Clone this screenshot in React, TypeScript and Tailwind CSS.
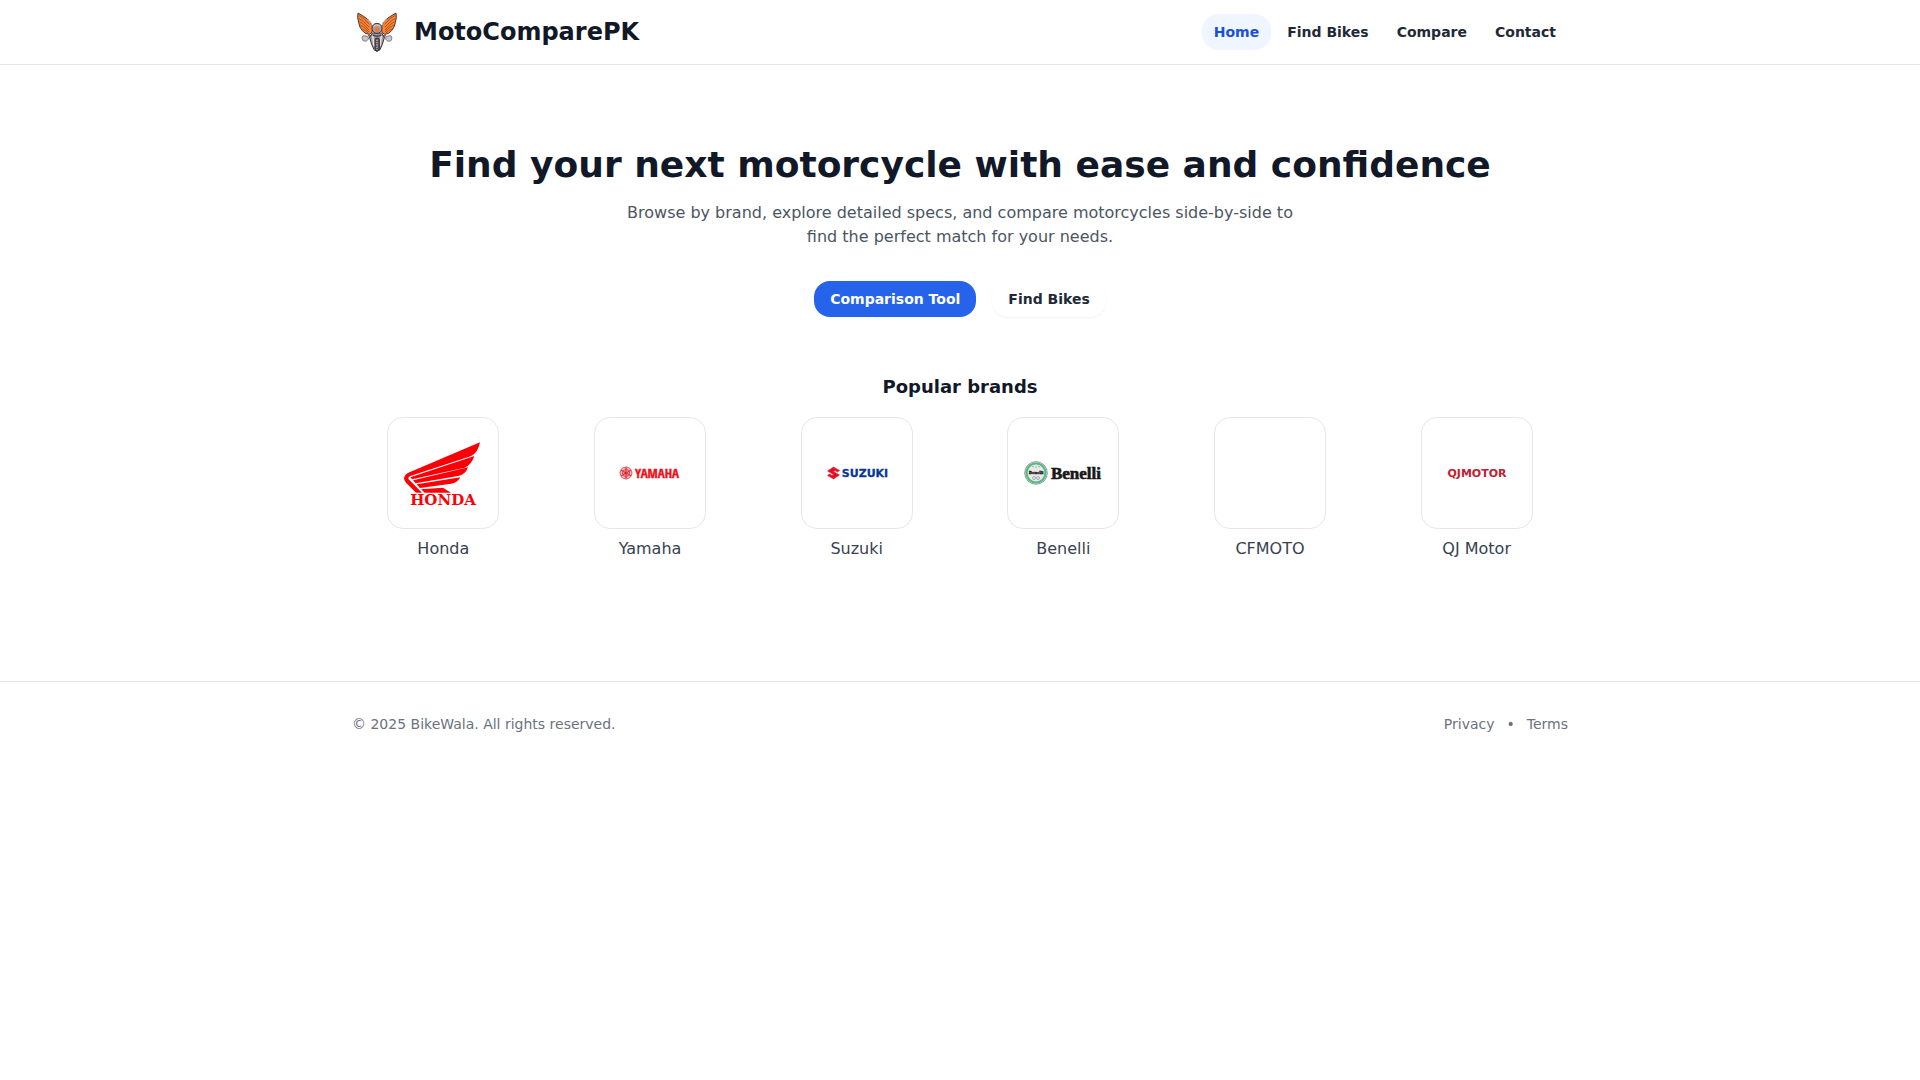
import type { ReactNode } from "react";

function WingedBikeLogo() {
  const wing = (
    <>
      <path d="M18 18 L33 27 L46 36 L56 47 L62 62 L60 76 L52 82 L40 79 L31 71 L24 60 L20 47 L17 32 Z" fill="#fb8432" stroke="#4b3539" strokeWidth="3" strokeLinejoin="round" />
      <path d="M20 25 L36 35 L52 52 M20 34 L34 43 L52 61 M22 44 L35 52 L51 69 M25 54 L37 61 L51 75 M31 66 L40 71 L49 79" fill="none" stroke="#7d3d22" strokeWidth="2" />
      <path d="M47 37 L57 47 L61 57" fill="none" stroke="#c9c3c3" strokeWidth="3" />
      <path d="M33 86 L30 93 L33 101 L42 103 L50 96 L47 88 Z" fill="#cbc7c9" stroke="#5f5257" strokeWidth="2" />
      <path d="M49 84 L62 87 L62 98 L53 93 Z" fill="#8b8084" stroke="#514449" strokeWidth="2" />
    </>
  );
  return (
    <svg viewBox="0 0 150 150" className="h-[50px] w-[50px]" aria-hidden="true">
      {wing}
      <g transform="matrix(-1 0 0 1 150 0)">{wing}</g>
      <path d="M61 78 L89 78 L97 92 L91 112 L84 128 L75 133 L66 128 L59 112 L53 92 Z" fill="#a39b9e" stroke="#47353a" strokeWidth="3" />
      <path d="M62 86 L66 117 M88 86 L84 117" stroke="#eeeaea" strokeWidth="4" />
      <circle cx="75" cy="64" r="15" fill="#a99fa1" stroke="#47353a" strokeWidth="3" />
      <path d="M64 58 Q75 49 85 58" fill="none" stroke="#d8d3d3" strokeWidth="3" />
      <path d="M68 70 Q69 60 77 61 Q84 64 81 72 Q75 79 68 70" fill="#f4742b" />
      <path d="M62 84 Q75 91 88 84" fill="none" stroke="#47353a" strokeWidth="4" />
      <rect x="69" y="93" width="13" height="39" rx="6" fill="#5d575e" stroke="#3b2e34" strokeWidth="3" />
      <path d="M75 98 V128" stroke="#b9b6ba" strokeWidth="4" strokeDasharray="4 3" />
    </svg>
  );
}

function HondaLogo() {
  return (
    <svg viewBox="0 -4 78 71" className="w-full" role="img" aria-label="Honda logo">
      <g transform="scale(.3333) translate(-72 -95)" fill="#fb0007">
        <path d="M300 96 L92 184 Q73 191 72 204 Q72 211 78 217 L108 247 L126 247 L86 207 Q83 201 91 197 L272 138 Q294 129 300 96 Z" />
        <path d="M283 137 L91 201 L97 207 L254 172 Q274 164 283 137 Z" />
        <path d="M264 171 L99 210 L107 219 L234 197 Q257 193 264 171 Z" />
        <path d="M241 201 L110 222 L120 233 L214 220 Q231 219 241 201 Z" />
        <path d="M189 232 L123 237 L134 247 L213 247 Z" />
      </g>
      <text x="39" y="63" textAnchor="middle" fontFamily="DejaVu Serif" fontWeight="700" fontSize="15" fill="#fb0007">HONDA</text>
    </svg>
  );
}

function YamahaLogo() {
  return (
    <svg viewBox="0 0 78 20" className="w-full" role="img" aria-label="Yamaha logo">
      <circle cx="15" cy="10" r="6" fill="#f5b5b9" stroke="#c4636b" strokeWidth="1" />
      <path d="M15 4.500V15.500M10.200 7.200L19.800 12.800M19.800 7.200L10.200 12.800" stroke="#e12733" strokeWidth="1.300" />
      <circle cx="15" cy="10" r="3.500" fill="none" stroke="#d94750" strokeWidth="1" />
      <text x="46" y="15" textAnchor="middle" fontFamily="Liberation Sans Narrow, Open Sans Condensed, Liberation Sans" fontWeight="700" fontSize="13" fill="#ed101b" stroke="#ed101b" strokeWidth=".4">YAMAHA</text>
    </svg>
  );
}

function SuzukiLogo() {
  return (
    <svg viewBox="0 0 78 20" className="w-full" role="img" aria-label="Suzuki logo">
      <path d="M15.500 4 L9.500 8 L15.500 11.500 L14 12.500 L11.500 11 L9.500 12.500 L15.500 16 L21.500 12 L15.500 8.500 L17 7.500 L19.500 9 L21.500 7.500 Z" fill="#e60f24" stroke="#e60f24" strokeWidth=".5" />
      <text x="47" y="14" textAnchor="middle" fontFamily="DejaVu Sans" fontWeight="700" fontSize="11" fill="#0a3594" stroke="#0a3594" strokeWidth=".3">SUZUKI</text>
    </svg>
  );
}

function BenelliLogo() {
  return (
    <svg viewBox="0 0 78 24" className="w-full" role="img" aria-label="Benelli logo">
      <circle cx="12" cy="12" r="11.300" fill="#e9e9e9" stroke="#929996" strokeWidth="1" />
      <circle cx="12" cy="12" r="9.500" fill="none" stroke="#50bd81" strokeWidth="2.200" />
      <path d="M8 6 L10 5 M12 7 V5 M16 6 L14 5" stroke="#aaaaaa" strokeWidth="1" />
      <circle cx="10" cy="17" r="1.500" fill="none" stroke="#ababab" />
      <circle cx="14" cy="17" r="1.500" fill="none" stroke="#ababab" />
      <rect x="4" y="9" width="16" height="5" fill="#e9e9e9" />
      <text x="12" y="13" textAnchor="middle" fontFamily="Liberation Serif" fontWeight="700" fontSize="5" fill="#111111" stroke="#111111" strokeWidth=".3">Benelli</text>
      <text x="52" y="18" textAnchor="middle" fontFamily="Liberation Serif" fontWeight="700" fontSize="17" fill="#181818" stroke="#181818" strokeWidth=".6">Benelli</text>
    </svg>
  );
}

function QJMotorLogo() {
  return (
    <svg viewBox="0 0 78 20" className="w-full" role="img" aria-label="QJ Motor logo">
      <text x="39" y="14" textAnchor="middle" fontFamily="DejaVu Sans" fontWeight="700" fontSize="11" fill="#bf2032">QJMOTOR</text>
    </svg>
  );
}

const navItems = ["Home", "Find Bikes", "Compare", "Contact"];

const brands: { name: string; logo: ReactNode }[] = [
  { name: "Honda", logo: <HondaLogo /> },
  { name: "Yamaha", logo: <YamahaLogo /> },
  { name: "Suzuki", logo: <SuzukiLogo /> },
  { name: "Benelli", logo: <BenelliLogo /> },
  { name: "CFMOTO", logo: null },
  { name: "QJ Motor", logo: <QJMotorLogo /> },
];

export default function App() {
  return (
    <div className="min-h-screen bg-white font-['DejaVu_Sans',sans-serif] text-[#111827]">
      <header className="border-b border-[#e5e7eb]">
        <div className="mx-auto flex h-16 max-w-7xl items-center justify-between px-8">
          <a href="#home" className="flex items-center gap-3">
            <WingedBikeLogo />
            <span className="text-2xl font-bold">MotoComparePK</span>
          </a>
          <nav className="flex items-center gap-1">
            {navItems.map((item) => (
              <a
                key={item}
                href="#"
                className={
                  item === "Home"
                    ? "rounded-2xl bg-[#eff6ff] px-3 py-2 text-sm font-semibold text-[#1d4ed8]"
                    : "rounded-2xl px-3 py-2 text-sm font-semibold text-[#1f2937]"
                }
              >
                {item}
              </a>
            ))}
          </nav>
        </div>
      </header>

      <main className="mx-auto mb-10 max-w-7xl px-8 py-20 text-center">
        <h1 className="text-4xl font-bold">Find your next motorcycle with ease and confidence</h1>
        <p className="mx-auto mt-4 max-w-2xl text-base text-[#4b5563]">
          Browse by brand, explore detailed specs, and compare motorcycles side-by-side to find the perfect match for your needs.
        </p>
        <div className="mt-8 flex justify-center gap-4">
          <button type="button" className="rounded-2xl bg-[#2563eb] px-4 py-2 text-sm font-semibold text-white">
            Comparison Tool
          </button>
          <button type="button" className="rounded-2xl bg-white px-4 py-2 text-sm font-semibold text-[#1f2937] shadow-xs">
            Find Bikes
          </button>
        </div>

        <h2 className="mt-14 text-lg font-semibold">Popular brands</h2>
        <div className="mt-4 grid grid-cols-6 gap-6">
          {brands.map((brand) => (
            <a key={brand.name} href="#" className="flex flex-col items-center">
              <span className="flex h-28 w-28 items-center justify-center rounded-2xl border border-[#e5e7eb] bg-white p-4">
                {brand.logo}
              </span>
              <span className="mt-2 text-base text-[#374151]">{brand.name}</span>
            </a>
          ))}
        </div>
      </main>

      <footer className="border-t border-[#e5e7eb]">
        <div className="mx-auto flex max-w-7xl items-center justify-between px-8 py-8 text-sm text-[#6b7280]">
          <p>© 2025 BikeWala. All rights reserved.</p>
          <div className="flex items-center gap-3">
            <a href="#privacy">Privacy</a>
            <span>•</span>
            <a href="#terms">Terms</a>
          </div>
        </div>
      </footer>
    </div>
  );
}
